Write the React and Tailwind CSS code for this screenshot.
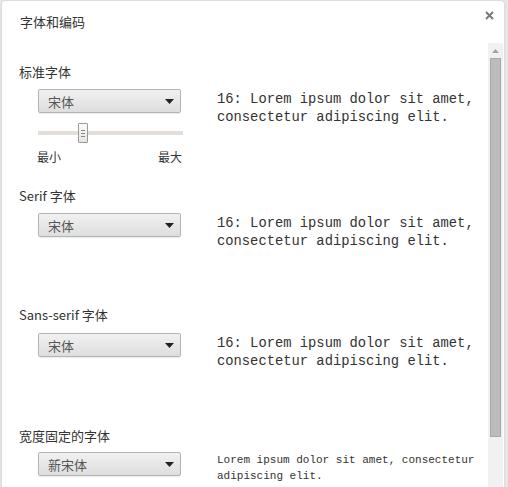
import React from "react";

const ui = { fontFamily: '"Noto Sans CJK SC", "Noto Sans", sans-serif' };
const mono = { fontFamily: '"Liberation Mono", "Noto Sans CJK SC", monospace' };

function Select({ label }) {
  return (
    <div className="w-[143px] h-[24px] shrink-0 rounded-[2px] border border-[#b4b4b4] bg-gradient-to-b from-[#f1f1f1] to-[#dedede] shadow-[0_1px_1px_rgba(0,0,0,0.08)] flex items-center justify-between pl-[9px] pr-[6px]">
      <span className="text-[13px] text-[#555] leading-none" style={ui}>{label}</span>
      <svg width="9" height="5" viewBox="0 0 9 5"><path d="M0 0 H9 L4.5 5 Z" fill="#222" /></svg>
    </div>
  );
}

function Preview({ children, small }) {
  return (
    <div
      className={
        small
          ? "ml-[36px] text-[11px] leading-[16px] text-[#333] whitespace-pre"
          : "ml-[36px] mt-[2px] text-[13.8px] leading-[18px] text-[#333] whitespace-pre"
      }
      style={mono}
    >
      {children}
    </div>
  );
}

function Heading({ children }) {
  return (
    <div className="h-[20px] leading-[20px] text-[13px] text-[#333] pl-[17px]" style={ui}>
      {children}
    </div>
  );
}

export default function App() {
  return (
    <div className="w-[508px] h-[487px] bg-[#e6e6e6] overflow-hidden pt-[1px] pl-[2px] pr-[4px]">
      <div className="relative h-full bg-white rounded-t-[3px] flex flex-col shadow-[0_0_2px_rgba(0,0,0,0.15)]">
        <div className="h-[42px] shrink-0 pl-[18px] pt-[11px] text-[13px] leading-[20px] text-[#333]" style={ui}>
          字体和编码
        </div>
        <div className="absolute right-[10px] top-[10px]">
          <svg width="9" height="9" viewBox="0 0 9 9">
            <path d="M1 1 L8 8 M8 1 L1 8" stroke="#7a7a7a" strokeWidth="2" />
          </svg>
        </div>
        <div className="flex flex-1 min-h-0">
          <div className="flex-1 pt-[19px] overflow-hidden">
            <div className="h-[124px]">
              <Heading>标准字体</Heading>
              <div className="flex pl-[36px] mt-[7px]">
                <div className="w-[143px] shrink-0">
                  <Select label="宋体" />
                  <div className="relative h-[24px] mt-[8px] w-[145px]">
                    <div className="absolute left-0 right-0 top-[10px] h-[4px] bg-[#e3dfd8]" />
                    <div className="absolute left-[40px] top-[2px] w-[10px] h-[20px] border border-[#9a9a9a] bg-gradient-to-b from-[#fafafa] to-[#e6e6e6] rounded-[1px] flex flex-col items-center justify-center gap-[2px]">
                      <div className="w-[4px] h-[1px] bg-[#888]" />
                      <div className="w-[4px] h-[1px] bg-[#888]" />
                      <div className="w-[4px] h-[1px] bg-[#888]" />
                    </div>
                  </div>
                  <div className="flex justify-between w-[145px] -ml-[1px] mt-[3px] text-[12px] leading-[18px] text-[#333]" style={ui}>
                    <span>最小</span>
                    <span>最大</span>
                  </div>
                </div>
                <Preview>{"16: Lorem ipsum dolor sit amet,\nconsectetur adipiscing elit."}</Preview>
              </div>
            </div>
            <div className="h-[119px]">
              <Heading>Serif 字体</Heading>
              <div className="flex pl-[36px] mt-[7px]">
                <Select label="宋体" />
                <Preview>{"16: Lorem ipsum dolor sit amet,\nconsectetur adipiscing elit."}</Preview>
              </div>
            </div>
            <div className="h-[121px]">
              <Heading>Sans-serif 字体</Heading>
              <div className="flex pl-[36px] mt-[8px]">
                <Select label="宋体" />
                <Preview>{"16: Lorem ipsum dolor sit amet,\nconsectetur adipiscing elit."}</Preview>
              </div>
            </div>
            <div>
              <Heading>宽度固定的字体</Heading>
              <div className="flex pl-[36px] mt-[6px]">
                <Select label="新宋体" />
                <Preview small>{"Lorem ipsum dolor sit amet, consectetur\nadipiscing elit."}</Preview>
              </div>
            </div>
          </div>
          <div className="w-[15px] mr-[1px] shrink-0 bg-[#f1f1f1] flex flex-col items-center">
            <div className="h-[15px] flex items-center justify-center">
              <svg width="7" height="4" viewBox="0 0 7 4"><path d="M0 4 L3.5 0 L7 4 Z" fill="#a3a3a3" /></svg>
            </div>
            <div className="w-[11px] h-[379px] bg-[#bcbcbc] border border-[#a9a9a9]" />
          </div>
        </div>
      </div>
    </div>
  );
}
